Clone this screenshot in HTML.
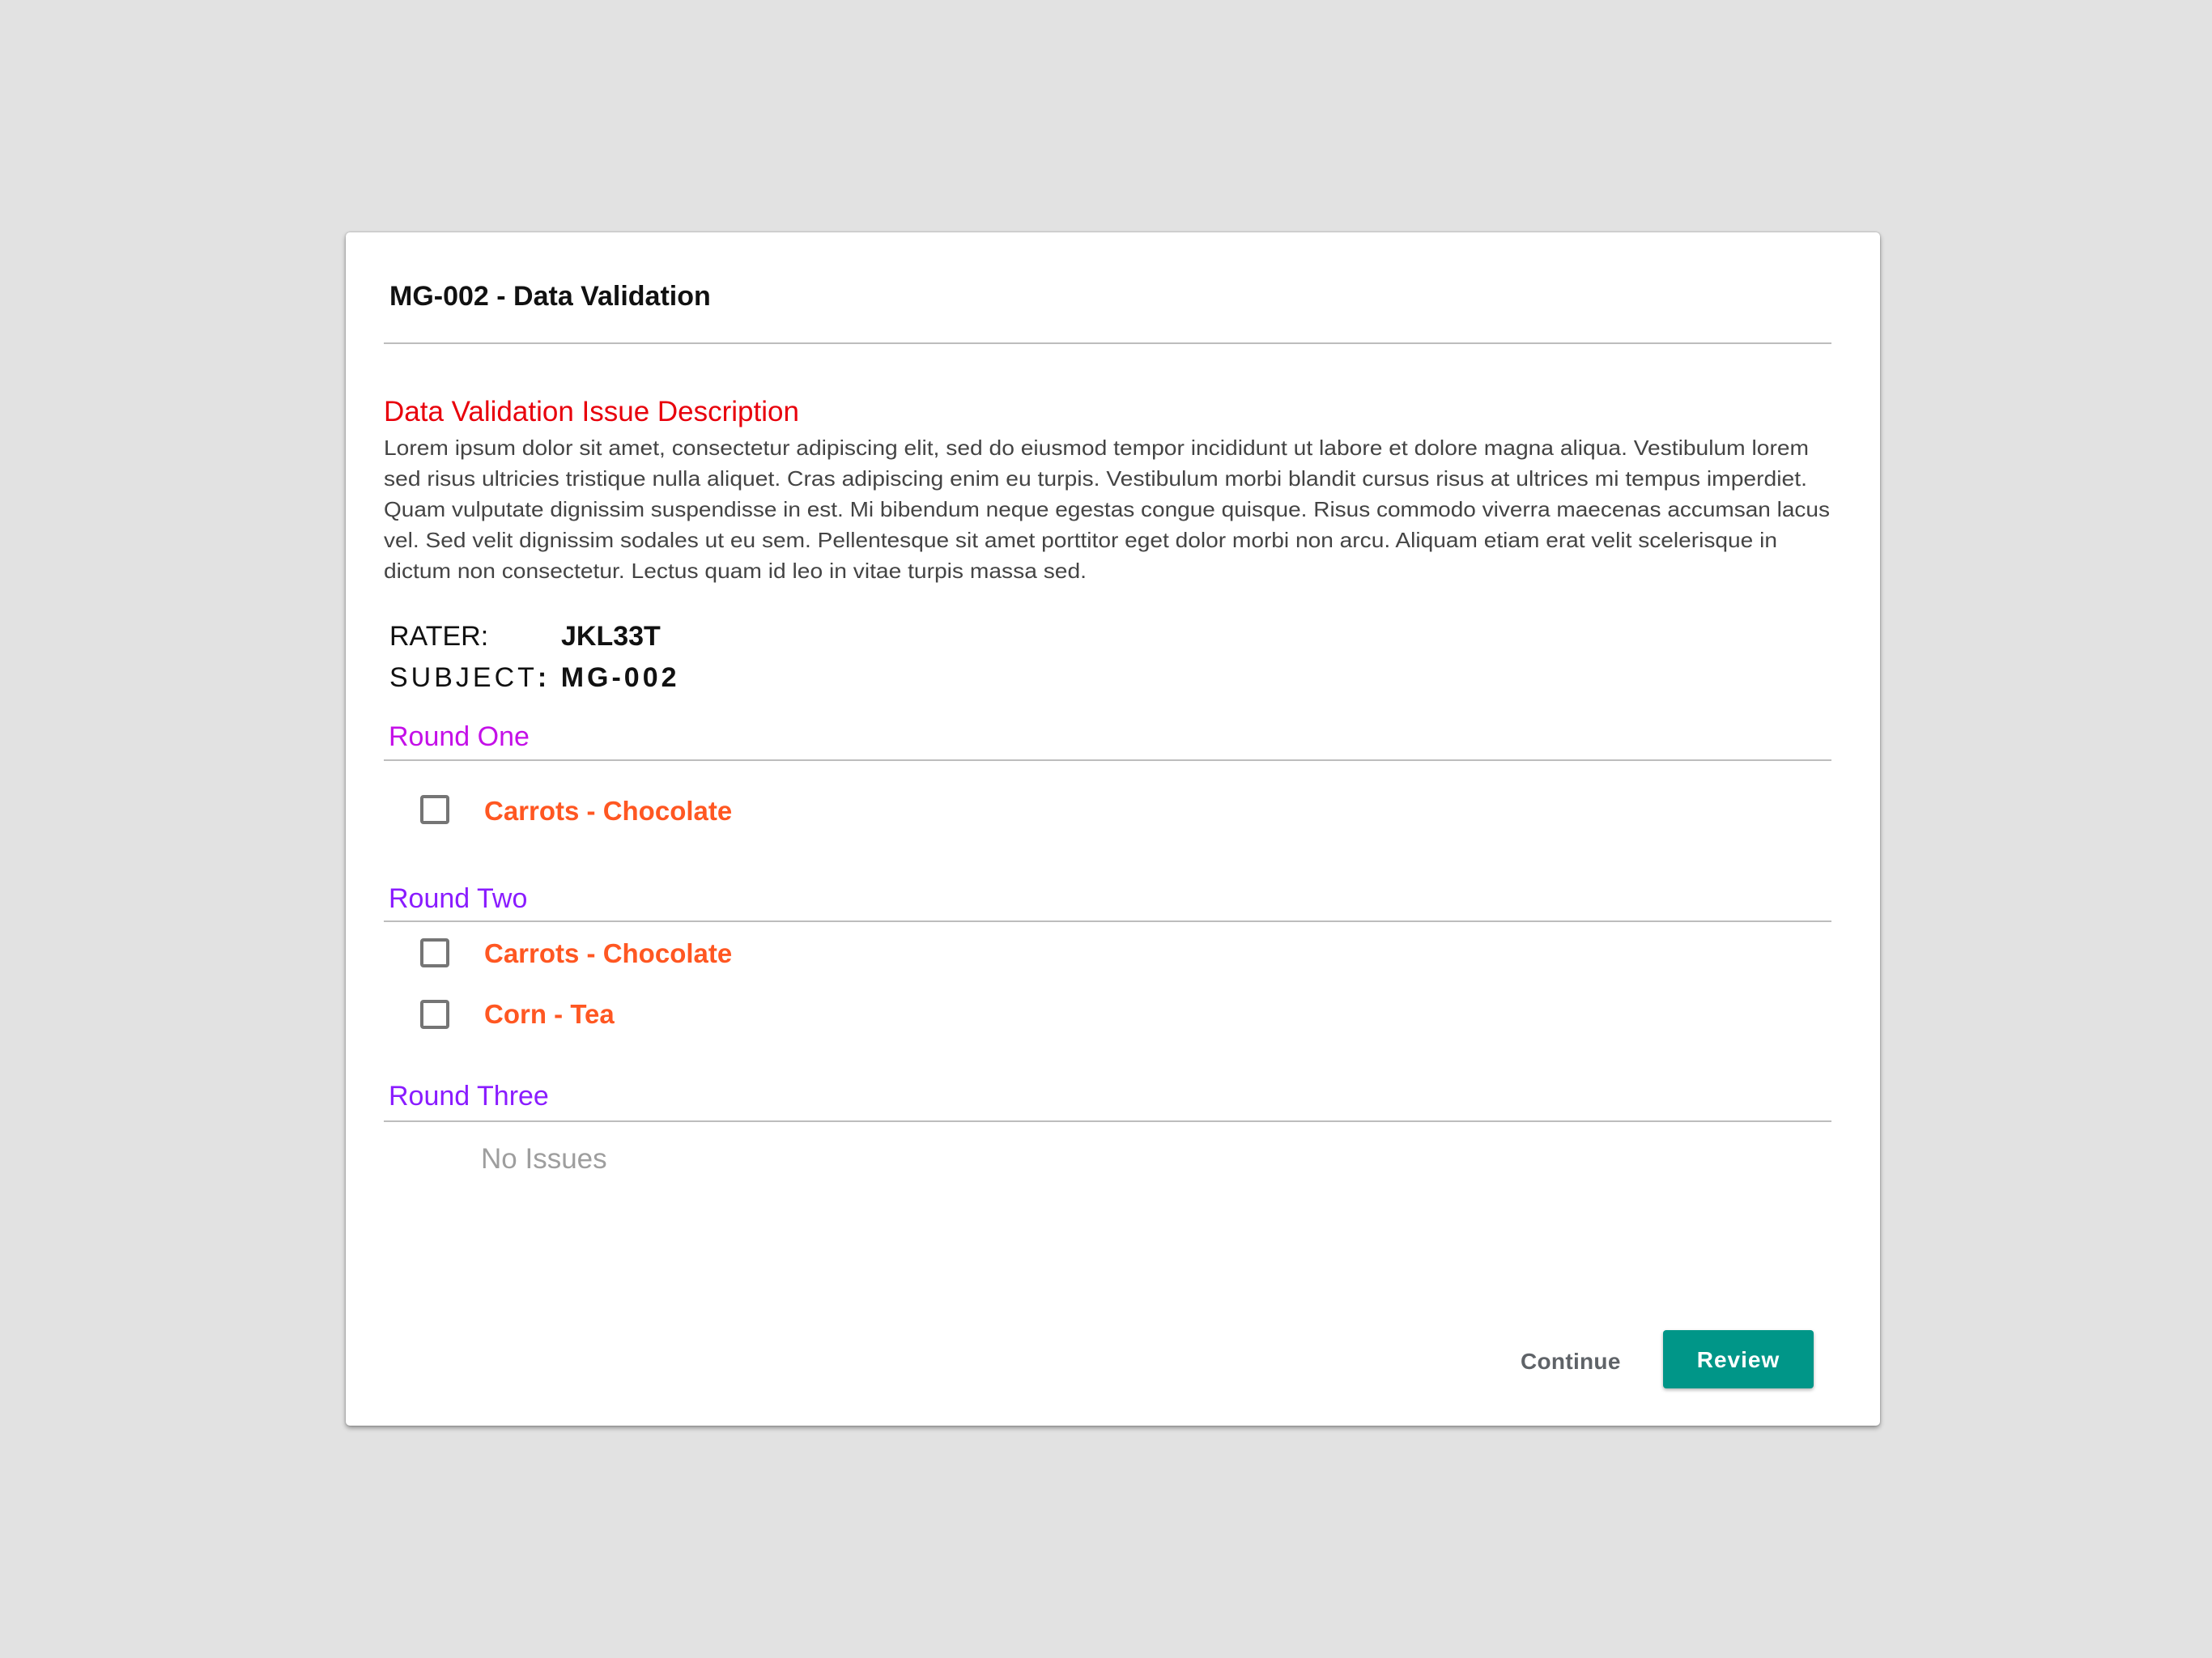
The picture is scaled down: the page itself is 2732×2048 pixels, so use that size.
<!DOCTYPE html>
<html><head><meta charset="utf-8"><style>
*{margin:0;padding:0;box-sizing:border-box}
body{width:2732px;height:2048px;background:#e2e2e2;position:relative;overflow:hidden;font-family:"Liberation Sans",sans-serif}
.dlg{position:absolute;left:427px;top:287px;width:1895px;height:1474px;background:#fff;border-radius:5px;box-shadow:0 3px 6px rgba(0,0,0,.35),0 0 2px rgba(0,0,0,.3)}
.t{position:absolute;white-space:nowrap;line-height:40px}
.hr{position:absolute;left:474px;width:1788px;height:2px;background:#bdbdbd}
.cb{position:absolute;left:519px;width:36px;height:36px;border:4px solid #757575;border-radius:4px}
.item{color:#ff5722;font-size:33px;font-weight:bold;left:598px}
.round{font-size:34px;left:480px}
</style></head><body>
<div class="dlg"></div>
<div class="t" style="left:481px;top:346px;font-size:34px;font-weight:bold;color:#111">MG-002 - Data Validation</div>
<div class="hr" style="top:423px"></div>
<div class="t" style="left:474px;top:489px;font-size:35px;color:#e8000b">Data Validation Issue Description</div>
<svg style="position:absolute;left:0;top:0" width="2732" height="760" font-family="Liberation Sans, sans-serif" font-size="26" fill="#444">
<text x="474" y="562" textLength="1760" lengthAdjust="spacingAndGlyphs">Lorem ipsum dolor sit amet, consectetur adipiscing elit, sed do eiusmod tempor incididunt ut labore et dolore magna aliqua. Vestibulum lorem</text>
<text x="474" y="600" textLength="1758" lengthAdjust="spacingAndGlyphs">sed risus ultricies tristique nulla aliquet. Cras adipiscing enim eu turpis. Vestibulum morbi blandit cursus risus at ultrices mi tempus imperdiet.</text>
<text x="474" y="638" textLength="1786" lengthAdjust="spacingAndGlyphs">Quam vulputate dignissim suspendisse in est. Mi bibendum neque egestas congue quisque. Risus commodo viverra maecenas accumsan lacus</text>
<text x="474" y="676" textLength="1721" lengthAdjust="spacingAndGlyphs">vel. Sed velit dignissim sodales ut eu sem. Pellentesque sit amet porttitor eget dolor morbi non arcu. Aliquam etiam erat velit scelerisque in</text>
<text x="474" y="714" textLength="868" lengthAdjust="spacingAndGlyphs">dictum non consectetur. Lectus quam id leo in vitae turpis massa sed.</text>
</svg>
<div class="t" style="left:481px;top:766px;font-size:34px;color:#111">RATER:</div>
<div class="t" style="left:693px;top:766px;font-size:34px;font-weight:bold;color:#111">JKL33T</div>
<div class="t" style="left:481px;top:817px;font-size:34px;color:#111;letter-spacing:4px">SUBJECT<b>:</b> <b>MG-002</b></div>
<div class="t round" style="top:890px;color:#c410e8">Round One</div>
<div class="hr" style="top:938px"></div>
<div class="cb" style="top:982px"></div>
<div class="t item" style="top:982px">Carrots - Chocolate</div>
<div class="t round" style="top:1090px;color:#8a1cff">Round Two</div>
<div class="hr" style="top:1137px"></div>
<div class="cb" style="top:1159px"></div>
<div class="t item" style="top:1158px">Carrots - Chocolate</div>
<div class="cb" style="top:1235px"></div>
<div class="t item" style="top:1233px">Corn - Tea</div>
<div class="t round" style="top:1334px;color:#8a1cff">Round Three</div>
<div class="hr" style="top:1384px"></div>
<div class="t" style="left:594px;top:1412px;font-size:35px;color:#9e9e9e">No Issues</div>
<div class="t" style="left:1878px;top:1662px;font-size:28px;font-weight:bold;color:#5f6368;letter-spacing:0.3px">Continue</div>
<div style="position:absolute;left:2054px;top:1643px;width:186px;height:72px;background:#009688;border-radius:4px;box-shadow:0 2px 4px rgba(0,0,0,.3);color:#fff;font-size:28px;font-weight:bold;letter-spacing:1px;text-align:center;line-height:74px">Review</div>
</body></html>
